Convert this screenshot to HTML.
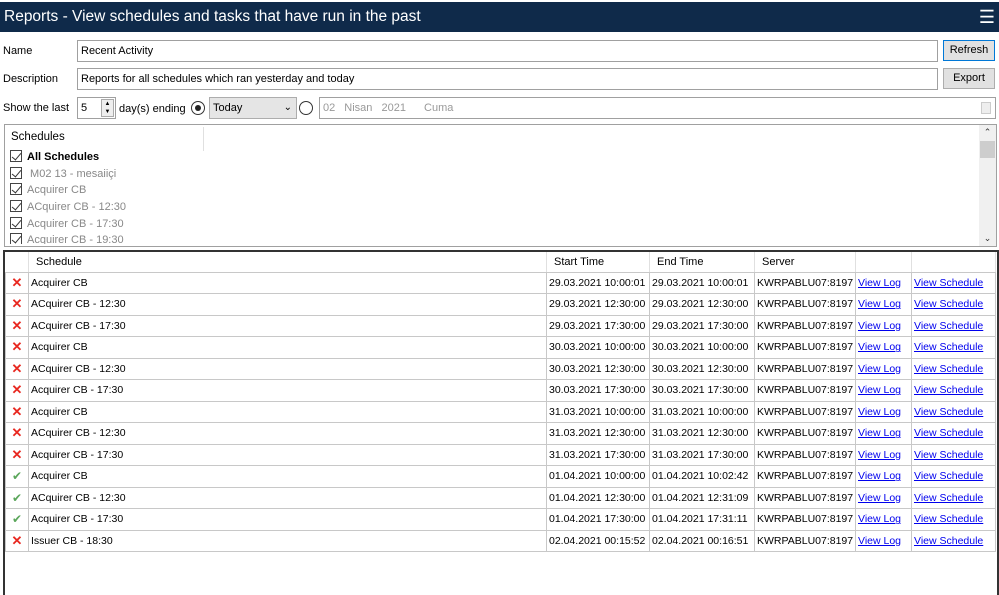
<!DOCTYPE html>
<html><head><meta charset="utf-8"><style>
*{box-sizing:border-box;margin:0;padding:0}
body{width:999px;height:595px;background:#fff;font-family:"Liberation Sans",sans-serif;font-size:11px;color:#000;position:relative;overflow:hidden}
.a{position:absolute}
.title{left:0;top:2px;width:999px;height:30px;background:#0f2a4a;color:#fff;font-size:15.5px;line-height:30px;padding-left:4px}
.inp{border:1px solid #a0a0a0;background:#fff;line-height:20px;padding-left:3px;white-space:nowrap}
.btn{border:1px solid #adadad;background:#e1e1e1;text-align:center;line-height:19px}
.lbl{line-height:16px}
table{border-collapse:collapse;table-layout:fixed}
td{border:1px solid #c8c8c8;height:21.5px;padding:0 2px;white-space:nowrap;overflow:hidden;font-size:10.5px}
th{height:20px;text-align:left;font-weight:normal;padding:0 7px;border-right:1px solid #e0e0e0;border-bottom:1px solid #c8c8c8}
a{color:#0000ee;text-decoration:underline}
.x{color:#e8271f;font-weight:bold;font-size:13px;text-align:center}
.ok{color:#5aa65a;font-size:12px;text-align:center}
.cb{display:inline-block;width:12px;height:12px;border:1px solid #444;margin-right:5px;vertical-align:-2px;position:relative}
.cb:after{content:"";position:absolute;left:3px;top:0px;width:4px;height:8px;border:solid #333;border-width:0 1.3px 1.3px 0;transform:rotate(40deg)}
.sl div{height:16.7px;line-height:16.7px;color:#888}
</style></head><body>
<div class="a title">Reports - View schedules and tasks that have run in the past<span style="position:absolute;right:4px;top:0;font-size:18px">&#9776;</span></div>
<div class="a lbl" style="left:3px;top:43px">Name</div>
<div class="a inp" style="left:77px;top:40px;width:861px;height:22px">Recent Activity</div>
<div class="a btn" style="left:943px;top:40px;width:52px;height:21px;border:1px solid #0078d7">Refresh</div>
<div class="a lbl" style="left:3px;top:71px">Description</div>
<div class="a inp" style="left:77px;top:68px;width:861px;height:22px">Reports for all schedules which ran yesterday and today</div>
<div class="a btn" style="left:943px;top:68px;width:52px;height:21px">Export</div>
<div class="a lbl" style="left:3px;top:100px">Show the last</div>
<div class="a inp" style="left:77px;top:97px;width:39px;height:22px">5<span style="position:absolute;right:1px;top:1px;width:13px;height:18px;border:1px solid #aaa;background:#eee;font-size:6px;line-height:8px;text-align:center">▲<br>▼</span></div>
<div class="a lbl" style="left:119px;top:101px">day(s) ending</div>
<div class="a" style="left:191px;top:101px;width:14px;height:14px;border:1px solid #333;border-radius:50%"><div style="margin:3px;width:6px;height:6px;border-radius:50%;background:#222"></div></div>
<div class="a" style="left:209px;top:97px;width:88px;height:22px;background:#e5e5e5;border:1px solid #adadad;line-height:20px;padding-left:3px">Today<span style="position:absolute;right:4px;top:0;font-size:10px">&#8964;</span></div>
<div class="a" style="left:299px;top:101px;width:14px;height:14px;border:1px solid #333;border-radius:50%"></div>
<div class="a inp" style="left:319px;top:97px;width:677px;height:22px;color:#999;word-spacing:6px">02 Nisan 2021 &nbsp;Cuma<span style="position:absolute;right:4px;top:4px;width:10px;height:12px;border:1px solid #ccc;background:#eee"></span></div>
<div class="a" style="left:4px;top:124px;width:993px;height:123px;border:1px solid #a0a0a0">
 <div class="a" style="left:6px;top:6px;font-size:11.5px">Schedules</div>
 <div class="a" style="left:198px;top:2px;height:24px;border-left:1px solid #e0e0e0"></div>
 <div class="a sl" style="left:5px;top:24px">
  <div style="color:#000;font-weight:bold"><span class="cb"></span>All Schedules</div>
  <div><span class="cb"></span> M02 13 - mesaiiçi</div>
  <div><span class="cb"></span>Acquirer CB</div>
  <div><span class="cb"></span>ACquirer CB - 12:30</div>
  <div><span class="cb"></span>Acquirer CB - 17:30</div>
  <div style="height:12px;overflow:hidden"><span class="cb"></span>Acquirer CB - 19:30</div>
 </div>
 <div class="a" style="right:0;top:0;width:17px;height:121px;background:#f0f0f0;font-size:9px;text-align:center;color:#333"><div style="line-height:15px">&#8963;</div><div style="margin:1px 1px;height:17px;background:#cdcdcd"></div><div style="position:absolute;bottom:2px;width:17px">&#8964;</div></div>
</div>
<div class="a" style="left:3px;top:250px;width:996px;height:345px;border:2px solid #333;border-bottom:none">
<table style="width:990px">
<colgroup><col style="width:23px"><col style="width:518px"><col style="width:103px"><col style="width:105px"><col style="width:101px"><col style="width:56px"><col style="width:84px"></colgroup>
<tr><th></th><th>Schedule</th><th>Start Time</th><th>End Time</th><th>Server</th><th></th><th></th></tr>
<tr><td class="x">✕</td><td>Acquirer CB</td><td>29.03.2021 10:00:01</td><td>29.03.2021 10:00:01</td><td>KWRPABLU07:8197</td><td><a>View Log</a></td><td><a>View Schedule</a></td></tr>
<tr><td class="x">✕</td><td>ACquirer CB - 12:30</td><td>29.03.2021 12:30:00</td><td>29.03.2021 12:30:00</td><td>KWRPABLU07:8197</td><td><a>View Log</a></td><td><a>View Schedule</a></td></tr>
<tr><td class="x">✕</td><td>ACquirer CB - 17:30</td><td>29.03.2021 17:30:00</td><td>29.03.2021 17:30:00</td><td>KWRPABLU07:8197</td><td><a>View Log</a></td><td><a>View Schedule</a></td></tr>
<tr><td class="x">✕</td><td>Acquirer CB</td><td>30.03.2021 10:00:00</td><td>30.03.2021 10:00:00</td><td>KWRPABLU07:8197</td><td><a>View Log</a></td><td><a>View Schedule</a></td></tr>
<tr><td class="x">✕</td><td>ACquirer CB - 12:30</td><td>30.03.2021 12:30:00</td><td>30.03.2021 12:30:00</td><td>KWRPABLU07:8197</td><td><a>View Log</a></td><td><a>View Schedule</a></td></tr>
<tr><td class="x">✕</td><td>Acquirer CB - 17:30</td><td>30.03.2021 17:30:00</td><td>30.03.2021 17:30:00</td><td>KWRPABLU07:8197</td><td><a>View Log</a></td><td><a>View Schedule</a></td></tr>
<tr><td class="x">✕</td><td>Acquirer CB</td><td>31.03.2021 10:00:00</td><td>31.03.2021 10:00:00</td><td>KWRPABLU07:8197</td><td><a>View Log</a></td><td><a>View Schedule</a></td></tr>
<tr><td class="x">✕</td><td>ACquirer CB - 12:30</td><td>31.03.2021 12:30:00</td><td>31.03.2021 12:30:00</td><td>KWRPABLU07:8197</td><td><a>View Log</a></td><td><a>View Schedule</a></td></tr>
<tr><td class="x">✕</td><td>Acquirer CB - 17:30</td><td>31.03.2021 17:30:00</td><td>31.03.2021 17:30:00</td><td>KWRPABLU07:8197</td><td><a>View Log</a></td><td><a>View Schedule</a></td></tr>
<tr><td class="ok">✔</td><td>Acquirer CB</td><td>01.04.2021 10:00:00</td><td>01.04.2021 10:02:42</td><td>KWRPABLU07:8197</td><td><a>View Log</a></td><td><a>View Schedule</a></td></tr>
<tr><td class="ok">✔</td><td>ACquirer CB - 12:30</td><td>01.04.2021 12:30:00</td><td>01.04.2021 12:31:09</td><td>KWRPABLU07:8197</td><td><a>View Log</a></td><td><a>View Schedule</a></td></tr>
<tr><td class="ok">✔</td><td>Acquirer CB - 17:30</td><td>01.04.2021 17:30:00</td><td>01.04.2021 17:31:11</td><td>KWRPABLU07:8197</td><td><a>View Log</a></td><td><a>View Schedule</a></td></tr>
<tr><td class="x">✕</td><td>Issuer CB - 18:30</td><td>02.04.2021 00:15:52</td><td>02.04.2021 00:16:51</td><td>KWRPABLU07:8197</td><td><a>View Log</a></td><td><a>View Schedule</a></td></tr>
</table>
</div>
</body></html>
